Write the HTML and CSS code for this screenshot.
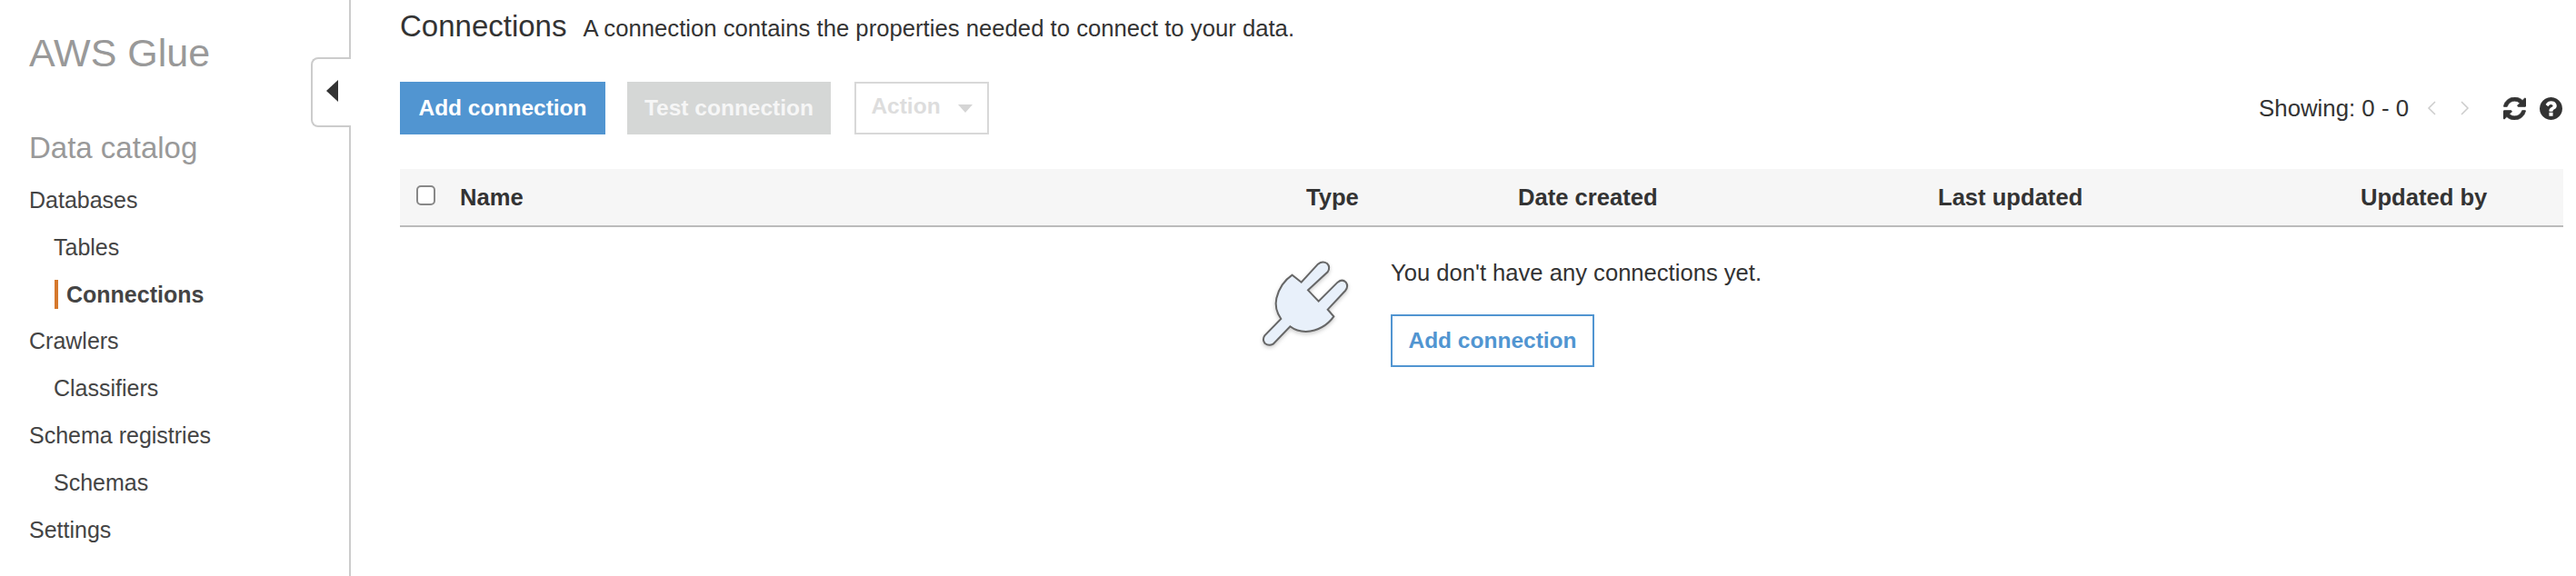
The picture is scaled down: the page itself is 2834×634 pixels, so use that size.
FILE: index.html
```html
<!doctype html>
<html lang="en">

<head>
    <meta charset="utf-8">
    <title>AWS Glue - Connections</title>
    <link rel="stylesheet" href="styles.css">
</head>

<body>
<aside class="sidebar">
    <div class="brand">AWS Glue</div>
    <div class="nav-title">Data catalog</div>
    <nav class="nav">
        <a class="nav-item">Databases</a>
        <a class="nav-item nav-sub">Tables</a>
        <a class="nav-item nav-sub nav-active"><span>Connections</span></a>
        <a class="nav-item">Crawlers</a>
        <a class="nav-item nav-sub">Classifiers</a>
        <a class="nav-item">Schema registries</a>
        <a class="nav-item nav-sub">Schemas</a>
        <a class="nav-item">Settings</a>
    </nav>
    <!-- collapse tab, sits over the sidebar border -->
    <div class="collapse-tab"><i class="arrow-left"></i></div>
</aside>

<main class="content">
    <header class="page-head">
        <h1>Connections</h1>
        <p>A connection contains the properties needed to connect to your data.</p>
    </header>

    <section class="toolbar">
        <button class="btn btn-primary">Add connection</button>
        <button class="btn btn-disabled">Test connection</button>
        <button class="btn btn-action">Action <i class="caret"></i></button>
        <div class="pager">
            <span class="showing">Showing: 0 - 0</span>
            <svg class="chevron" viewBox="0 0 10 16"><path d="M9 1L2 8l7 7"/></svg>
            <svg class="chevron chevron-next" viewBox="0 0 10 16"><path d="M1 1l7 7-7 7"/></svg>
            <svg class="tool-icon tool-refresh" viewBox="128 128 1536 1536"><path d="M1639 1056q0 5-1 7-64 268-268 434.5t-478 166.5q-146 0-282.5-55t-243.5-157l-129 129q-19 19-45 19t-45-19-19-45v-448q0-26 19-45t45-19h448q26 0 45 19t19 45-19 45l-137 137q71 66 161 102t187 36q134 0 250-65t186-179q11-17 53-117 8-23 30-23h192q13 0 22.5 9.5t9.5 22.5zm25-800v448q0 26-19 45t-45 19h-448q-26 0-45-19t-19-45 19-45l138-138q-148-137-349-137-134 0-250 65t-186 179q-11 17-53 117-8 23-30 23h-199q-13 0-22.5-9.5t-9.5-22.5v-7q65-268 270-434.5t480-166.5q146 0 284 55.5t245 156.5l130-129q19-19 45-19t45 19 19 45z"/></svg>
            <svg class="tool-icon" viewBox="128 128 1536 1536"><path d="M1024 1376v-192q0-14-9-23t-23-9h-192q-14 0-23 9t-9 23v192q0 14 9 23t23 9h192q14 0 23-9t9-23zm256-672q0-88-55.5-163t-138.5-116-170-41q-243 0-371 213-15 24 8 42l132 100q7 6 19 6 16 0 25-12 53-68 86-92 34-24 86-24 48 0 85.5 26t37.5 59q0 38-20 61t-68 45q-63 28-115.5 86.5t-52.5 125.5v36q0 14 9 23t23 9h192q14 0 23-9t9-23q0-19 21.5-49.5t54.5-49.5q32-18 49-28.5t46-35 44.5-48 28-60.5 12.5-81zm384 192q0 209-103 385.5t-279.5 279.5-385.5 103-385.5-103-279.5-279.5-103-385.5 103-385.5 279.5-279.5 385.5-103 385.5 103 279.5 279.5 103 385.5z"/></svg>
        </div>
    </section>

    <section class="table-head">
        <div class="col-check"><input type="checkbox" class="check"></div>
        <div>Name</div>
        <div>Type</div>
        <div>Date created</div>
        <div>Last updated</div>
        <div>Updated by</div>
    </section>

    <section class="empty">
        <svg class="plug" viewBox="0 0 450 360">
            <path d="M185 98L215 122L270 62Q285 50 300 60Q312 72 302 88L237 148L272 185L335 122Q350 110 362 122Q372 136 360 150L302 212L322 235Q290 280 230 285Q200 285 178 268L122 326Q108 334 95 324Q85 312 94 298L148 243Q125 210 133 175Q145 125 185 98Z"/>
        </svg>
        <div class="empty-text">
            <p>You don't have any connections yet.</p>
            <button class="btn btn-outline">Add connection</button>
        </div>
    </section>
</main>
</body>

</html>
```

FILE: styles.css
```css
* {
    box-sizing: border-box;
}

html, body {
    margin: 0;
    height: 634px;
    overflow: hidden;
}

body {
    display: flex;
    font-family: "Liberation Sans", Arial, sans-serif;
    font-size: 25.6px;
    color: #333;
    background-color: #fff;
}

/* sidebar */
.sidebar {
    position: relative;
    flex: none;
    width: 386px;
    height: 634px;
    padding: 32px 0 0 32px;
    border-right: 2px solid #ccc;
    font-size: 25px;
}

.brand {
    font-size: 43px;
    line-height: 52px;
    color: #999;
}

.nav-title {
    margin-top: 53px;
    font-size: 33px;
    line-height: 52px;
    color: #999;
}

.nav {
    display: flex;
    flex-direction: column;
    margin-top: 6px;
}

.nav-item {
    height: 51.8px;
    line-height: 51.8px;
    color: #444;
}

.nav-sub {
    padding-left: 27px;
}

.nav-active {
    display: flex;
    align-items: center;
    font-weight: bold;
}

.nav-active span {
    height: 32px;
    line-height: 32px;
    margin-left: 1px;
    padding-left: 9px;
    border-left: 4px solid #d5782c;
}

.collapse-tab {
    position: absolute;
    top: 63px;
    right: -2px;
    width: 44px;
    height: 77px;
    display: flex;
    align-items: center;
    padding-left: 15px;
    background-color: #fff;
    border: 2px solid #ccc;
    border-right: none;
    border-radius: 8px 0 0 8px;
}

.arrow-left {
    width: 0;
    height: 0;
    margin-bottom: 4px;
    border-top: 12px solid transparent;
    border-bottom: 12px solid transparent;
    border-right: 13px solid #333;
}

/* main part */
.content {
    flex: 1;
    padding: 0 14px 0 54px;
}

.page-head {
    display: flex;
    align-items: baseline;
    gap: 18px;
    height: 58px;
    line-height: 58px;
}

.page-head h1 {
    margin: 0;
    font-size: 33px;
    font-weight: normal;
}

.page-head p {
    margin: 0;
    font-size: 25.7px;
}

.toolbar {
    display: flex;
    align-items: center;
    margin-top: 32px;
    height: 58px;
}

.btn {
    height: 58px;
    padding: 0;
    border: none;
    border-radius: 0;
    font-family: inherit;
    font-size: 24.5px;
    font-weight: bold;
}

.btn-primary {
    width: 226px;
    color: #fff;
    background-color: #5195d1;
}

.btn-disabled {
    width: 224px;
    margin-left: 24px;
    color: #f6f6f6;
    background-color: #d5d7d6;
}

.btn-action {
    display: flex;
    align-items: center;
    justify-content: center;
    gap: 19px;
    width: 148px;
    margin-left: 26px;
    padding-bottom: 4px;
    color: #ddd;
    background-color: #fff;
    border: 2px solid #d8d8d8;
}

.caret {
    width: 0;
    height: 0;
    margin-top: 4px;
    border-left: 8.5px solid transparent;
    border-right: 8.5px solid transparent;
    border-top: 9px solid #d5d5d5;
}

.btn-outline {
    width: 224px;
    color: #5195d1;
    background-color: #fff;
    border: 2px solid #5195d1;
}

.pager {
    display: flex;
    align-items: center;
    margin-left: auto;
    padding-right: 1px;
}

.showing {
    margin-right: 20px;
    font-size: 25.8px;
    color: #333;
}

.chevron {
    width: 10px;
    height: 16px;
    fill: none;
    stroke: #ccc;
    stroke-width: 1.5;
}

.chevron-next {
    margin-left: 27px;
}

.tool-icon {
    width: 25px;
    height: 25px;
    margin-left: 15px;
    fill: #333;
}

.tool-refresh {
    margin-left: 37px;
    stroke: #333;
    stroke-width: 40;
}

/* table header */
.table-head {
    display: grid;
    grid-template-columns: 66px 931px 233px 462px 465px auto;
    align-items: center;
    height: 64px;
    margin-top: 38px;
    font-weight: bold;
    color: #333;
    background-color: #f6f6f6;
    border-bottom: 2px solid #bbb;
}

.col-check {
    display: flex;
    padding-left: 18px;
}

.check {
    appearance: none;
    width: 21px;
    height: 22px;
    margin: 0 0 4px;
    background-color: #fff;
    border: 2px solid #888;
    border-radius: 5px;
}

/* empty table */
.empty {
    display: flex;
    margin: 20px 0 0 920px;
}

.plug {
    flex: none;
    width: 150px;
    height: 120px;
    fill: #e8f0fa;
    stroke: #666;
    stroke-width: 6;
    filter: drop-shadow(0 2px 2px rgba(0, 0, 0, 0.2));
}

.empty-text {
    margin-left: 20px;
    padding-top: 10px;
}

.empty-text p {
    margin: 0 0 26px;
    line-height: 40px;
}
```
